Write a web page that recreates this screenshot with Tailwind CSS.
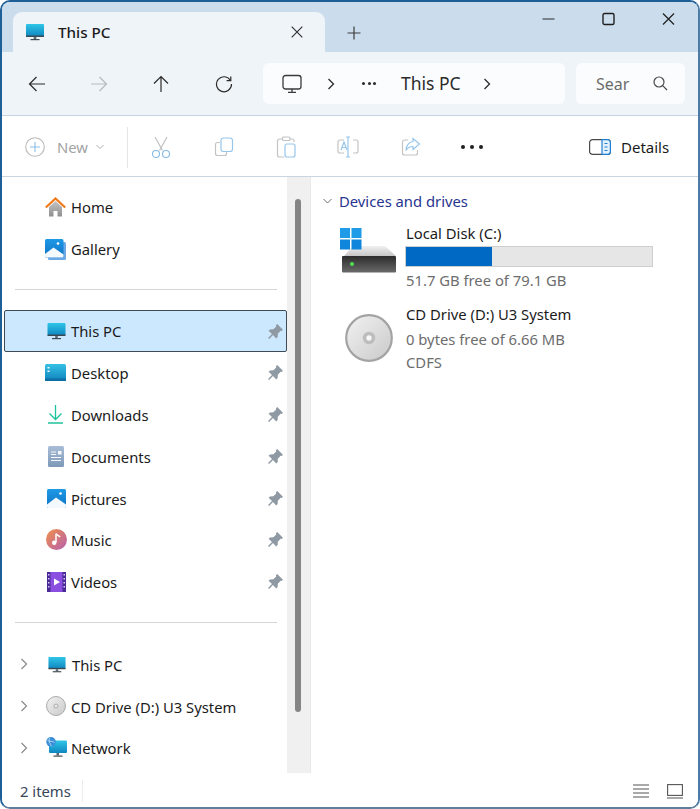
<!DOCTYPE html>
<html>
<head>
    <meta charset="UTF-8">
    <title>This PC - File Explorer</title>
    <script src="https://cdn.jsdelivr.net/npm/@tailwindcss/browser@4"></script>
</head>
<body class="bg-white font-['Noto_Sans',sans-serif] text-[14.800px] text-[#1b1b1b] overflow-hidden">
    <!-- shared icons -->
    <svg width="0" height="0" class="absolute">
        <defs>
            <linearGradient id="screen" x1="0" y1="0" x2="0" y2="1"><stop offset="0" stop-color="#2fc6e8"/><stop offset="1" stop-color="#0f86c0"/></linearGradient>
            <linearGradient id="disc" x1="0" y1="0" x2="1" y2="1"><stop offset="0" stop-color="#f2f2f2"/><stop offset="1" stop-color="#c9c9c9"/></linearGradient>
            <linearGradient id="tile" x1="0" y1="0" x2="0" y2="1"><stop offset="0" stop-color="#1e9ae6"/><stop offset="1" stop-color="#0d72c4"/></linearGradient>
            <linearGradient id="docs" x1="0" y1="0" x2="0" y2="1"><stop offset="0" stop-color="#a9bdd6"/><stop offset="1" stop-color="#7e98b8"/></linearGradient>
            <linearGradient id="music" x1="0" y1="0" x2="1" y2="1"><stop offset="0" stop-color="#f0904a"/><stop offset="1" stop-color="#b65fb0"/></linearGradient>
            <linearGradient id="desk" x1="0" y1="0" x2="0" y2="1"><stop offset="0" stop-color="#35c1e4"/><stop offset="1" stop-color="#0f82bd"/></linearGradient>
            <linearGradient id="driveFace" x1="0" y1="0" x2="0" y2="1"><stop offset="0" stop-color="#2b2b2b"/><stop offset="1" stop-color="#6a6a6a"/></linearGradient>
            <linearGradient id="driveTop" x1="0" y1="0" x2="0" y2="1"><stop offset="0" stop-color="#f0f0f0"/><stop offset="1" stop-color="#c6c6c6"/></linearGradient>
            <linearGradient id="house" x1="0" y1="0" x2="0" y2="1"><stop offset="0" stop-color="#c4c4c4"/><stop offset="1" stop-color="#8f8f8f"/></linearGradient>
            <symbol id="pin" viewBox="0 0 16 16"><path d="M9.600 1 15 6.400 13.800 7.600 12.800 7.300 10.200 10 10 13.200 8.700 14.500 5.600 11.300 2 15 1 14 4.700 10.400 1.500 7.300 2.800 6 6 5.800 8.700 3.200 8.400 2.200Z" fill="#8f99a3"/></symbol>
            <symbol id="monitor" viewBox="0 0 20 20"><rect x="1" y="2" width="18" height="12.500" rx="1" fill="url(#screen)"/><rect x="1" y="13.500" width="18" height="1.500" fill="#3a4a55"/><rect x="8.700" y="15" width="2.600" height="2" fill="#5b6770"/><rect x="5.500" y="17" width="9" height="1.200" fill="#3f4a52"/></symbol>
            <symbol id="cd" viewBox="0 0 20 20"><circle cx="10" cy="10" r="9.500" fill="url(#disc)" stroke="#a3a3a3" stroke-width=".9"/><circle cx="10" cy="10" r="2.600" fill="#bdbdbd"/><circle cx="10" cy="10" r="1.100" fill="#f7f7f7"/></symbol>
        </defs>
    </svg>

    <div class="w-[700px] h-[809px] flex flex-col overflow-hidden rounded-[10px] border-2 border-[#1f5f98] border-r-[#4c7ba6] border-b-[#5d7f9e] bg-white">
        <!-- title strip -->
        <div class="h-[50px] shrink-0 bg-[#cbddec] flex items-start pl-[11px]">
            <div class="w-[312px] h-[40px] mt-[10px] shrink-0 rounded-t-[9px] bg-[#eff4f9] flex items-center pl-[12px] pr-[22px]">
                <svg class="w-[20px] h-[20px] mr-[13px]" viewBox="0 0 20 20"><use href="#monitor"/></svg>
                <span class="flex-1 pt-[1px] text-[15.200px] font-medium text-[#1b1b1b]">This PC</span>
                <svg class="w-[12px] h-[12px]" viewBox="0 0 12 12" fill="none" stroke="#2b2b2b" stroke-width="1.100"><path d="M.7.7l10.600 10.600M11.300.7.7 11.300"/></svg>
            </div>
            <svg class="w-[14px] h-[14px] mt-[24px] ml-[22px]" viewBox="0 0 14 14" fill="none" stroke="#3c3c3c" stroke-width="1.200"><path d="M7 .5v13M.5 7h13"/></svg>
            <div class="flex-1"></div>
            <div class="flex items-center mt-[10px] pr-[23px] gap-[47px]">
                <svg class="w-[13px] h-[14px]" viewBox="0 0 13 14" fill="none" stroke="#2b2b2b" stroke-width="1.200"><path d="M.5 7h12"/></svg>
                <svg class="w-[13px] h-[14px]" viewBox="0 0 13 14" fill="none" stroke="#1f1f1f" stroke-width="1.400"><rect x="1" y="1.500" width="11" height="11" rx="1.500"/></svg>
                <svg class="w-[13px] h-[14px]" viewBox="0 0 13 14" fill="none" stroke="#1f1f1f" stroke-width="1.200"><path d="M1 1.500l11 11M12 1.500 1 12.500"/></svg>
            </div>
        </div>

        <!-- navigation row -->
        <div class="h-[64px] shrink-0 bg-[#eff4f9] border-b border-[#c4d3df] flex items-center pl-[26px]">
            <svg class="w-[18px] h-[18px]" viewBox="0 0 18 18" fill="none" stroke="#2b2b2b" stroke-width="1.200"><path d="M17 9H1.500M8.500 2 1.500 9l7 7"/></svg>
            <svg class="w-[18px] h-[18px] ml-[44px]" viewBox="0 0 18 18" fill="none" stroke="#b4bac0" stroke-width="1.200"><path d="M1 9h15.500M9.500 2l7 7-7 7"/></svg>
            <svg class="w-[18px] h-[18px] ml-[44px]" viewBox="0 0 18 18" fill="none" stroke="#2b2b2b" stroke-width="1.200"><path d="M9 17V1.500M2 8.500l7-7 7 7"/></svg>
            <svg class="w-[18px] h-[18px] ml-[45px]" viewBox="0 0 18 18" fill="none" stroke="#2b2b2b" stroke-width="1.200"><path d="M15.500 5.500A7.500 7.500 0 1 0 16.500 9"/><path d="M15.800 1.500v4.200h-4.200"/></svg>
            <div class="w-[302px] h-[41px] ml-[30px] rounded-[6px] bg-[#fbfcfe] flex items-center">
                <svg class="w-[20px] h-[20px] ml-[19px]" viewBox="0 0 20 20" fill="none" stroke="#3a3a3a" stroke-width="1.300"><rect x="1" y="1.500" width="18" height="13.500" rx="2.500"/><path d="M10 15v3M6 18.300h8"/></svg>
                <svg class="w-[8px] h-[12px] ml-[25px]" viewBox="0 0 8 12" fill="none" stroke="#2b2b2b" stroke-width="1.300"><path d="M1.500 1 6.500 6l-5 5"/></svg>
                <span class="ml-[27px] flex gap-[2.500px]"><i class="w-[3px] h-[3px] rounded-full bg-[#2b2b2b]"></i><i class="w-[3px] h-[3px] rounded-full bg-[#2b2b2b]"></i><i class="w-[3px] h-[3px] rounded-full bg-[#2b2b2b]"></i></span>
                <span class="ml-[25px] w-[59px] whitespace-nowrap text-[17.500px] text-[#2b2b2b]">This PC</span>
                <svg class="w-[8px] h-[12px] ml-[23px]" viewBox="0 0 8 12" fill="none" stroke="#2b2b2b" stroke-width="1.300"><path d="M1.500 1 6.500 6l-5 5"/></svg>
            </div>
            <div class="w-[109px] h-[41px] ml-[11px] rounded-[6px] bg-[#fbfcfe] flex items-center pl-[20px]">
                <span class="w-[31px] whitespace-nowrap text-[16px] text-[#6b6b6b]">Sear</span>
                <svg class="w-[15px] h-[15px] ml-[26px]" viewBox="0 0 15 15" fill="none" stroke="#4a4a4a" stroke-width="1.200"><circle cx="6" cy="6" r="5"/><path d="M9.700 9.700 14 14"/></svg>
            </div>
        </div>

        <!-- command bar -->
        <div class="h-[61px] shrink-0 bg-white border-b border-[#c9d6df] flex items-center pl-[23px] pt-[2px]">
            <svg class="w-[20px] h-[20px]" viewBox="0 0 20 20" fill="none" stroke-width="1.100"><circle cx="10" cy="10" r="9.300" stroke="#b9b9b9"/><path d="M10 5v10M5 10h10" stroke="#8fbfe6"/></svg>
            <span class="ml-[12px] w-[31px] text-[14.800px] text-[#a3a3a3]">New</span>
            <svg class="w-[8px] h-[6px] ml-[8px]" viewBox="0 0 8 6" fill="none" stroke="#adadad"><path d="M.5 1 4 4.500 7.500 1"/></svg>
            <div class="w-px h-[41px] ml-[23px] bg-[#e6e6e6]"></div>
            <svg class="w-[20px] h-[22px] ml-[23px]" viewBox="0 0 20 22" fill="none" stroke-width="1.100"><path d="M4 1l7.500 13.500M16 1 8.500 14.500" stroke="#bdbdbd"/><circle cx="5" cy="18" r="3.500" stroke="#84bbe8"/><circle cx="15" cy="18" r="3.500" stroke="#84bbe8"/></svg>
            <svg class="w-[20px] h-[20px] ml-[43px]" viewBox="0 0 20 20" fill="none" stroke-width="1.200"><path d="M6 5.500H3.500A2 2 0 0 0 1.500 7.500v9a2 2 0 0 0 2 2h7a2 2 0 0 0 2-2V15" stroke="#c4c4c4"/><rect x="7" y="1" width="11.500" height="13.500" rx="2.500" stroke="#97c6ec"/></svg>
            <svg class="w-[20px] h-[22px] ml-[42px]" viewBox="0 0 20 22" fill="none" stroke-width="1.200"><path d="M6.500 3H3.500a2 2 0 0 0-2 2v14a2 2 0 0 0 2 2H8M14 3h2a2 2 0 0 1 2 2v1" stroke="#c4c4c4"/><rect x="6.500" y="1" width="7.500" height="3.500" rx="1" stroke="#c4c4c4"/><rect x="9" y="8" width="10" height="13" rx="2" stroke="#97c6ec"/></svg>
            <svg class="w-[22px] h-[22px] ml-[41px]" viewBox="0 0 22 22" fill="none" stroke-width="1.200"><path d="M7 4H3a2 2 0 0 0-2 2v9a2 2 0 0 0 2 2h4M16 4h3a2 2 0 0 1 2 2v9a2 2 0 0 1-2 2h-3" stroke="#c4c4c4"/><path d="M11 1v20M9 1h4M9 21h4" stroke="#97c6ec"/><path d="M4 14l3-8 3 8M5.200 11.500h3.600" stroke="#97c6ec"/></svg>
            <svg class="w-[20px] h-[20px] ml-[42px]" viewBox="0 0 20 20" fill="none" stroke-width="1.200"><path d="M7 3H3.500a2 2 0 0 0-2 2v11a2 2 0 0 0 2 2h11a2 2 0 0 0 2-2v-3" stroke="#c4c4c4"/><path d="M12 1.500 18.500 7 12 12.500V9.500C9 9.500 6.500 10.500 5 13.500 5 8.500 8 5 12 4.500Z" stroke="#97c6ec"/></svg>
            <span class="ml-[40px] flex gap-[5px]"><i class="w-[4px] h-[4px] rounded-full bg-[#1f1f1f]"></i><i class="w-[4px] h-[4px] rounded-full bg-[#1f1f1f]"></i><i class="w-[4px] h-[4px] rounded-full bg-[#1f1f1f]"></i></span>
            <svg class="w-[22px] h-[16px] ml-[106px]" viewBox="0 0 22 16" fill="none" stroke-width="1.200"><rect x=".6" y=".6" width="20.800" height="14.800" rx="3" stroke="#4a4a4a"/><path d="M13 .6h5.400a3 3 0 0 1 3 3v8.800a3 3 0 0 1-3 3H13Z" fill="#e3f1fc" stroke="#1f7fd1"/><path d="M15.500 4.500h3M15.500 8h3M15.500 11.500h3" stroke="#1f7fd1"/></svg>
            <span class="ml-[10px] text-[15px] text-[#1b1b1b]">Details</span>
        </div>

        <!-- main -->
        <div class="flex-1 min-h-0 flex">
            <div class="w-[285px] shrink-0 pt-[9.500px] [&_span]:pt-px">
                <div class="h-[41.750px] flex items-center pl-[43px]">
                    <svg class="w-[21px] h-[21px]" viewBox="0 0 21 21"><path d="M4 10v9.500h4.500v-5.500h4v5.500H17V10L10.500 4Z" fill="url(#house)"/><path d="M.8 10.500 10.500 1.500l9.700 9" fill="none" stroke="#ef7a1a" stroke-width="2.200"/></svg>
                    <span class="ml-[5px] -mt-[2px]">Home</span>
                </div>
                <div class="h-[41.750px] flex items-center pl-[43px]">
                    <svg class="w-[21px] h-[21px]" viewBox="0 0 21 21"><rect x="3" y="3" width="18" height="18" rx="1.500" fill="#6aa8e6"/><path d="M0 1.500A1.500 1.500 0 0 1 1.500 0H17a1.500 1.500 0 0 1 1.500 1.500V17a1.500 1.500 0 0 1-1.500 1.500H1.500A1.500 1.500 0 0 1 0 17Z" fill="url(#tile)"/><path d="M0 15 8.500 8.500 18.500 15.500V17a1.500 1.500 0 0 1-1.500 1.500H1.500A1.500 1.500 0 0 1 0 17Z" fill="#f4f9fe"/><circle cx="13" cy="4.500" r="1.300" fill="#fff"/></svg>
                    <span class="ml-[5px] -mt-[2px]">Gallery</span>
                </div>
                <div class="ml-[13px] mr-[10px] mt-[19px] mb-[20px] h-px bg-[#d5d5d5]"></div>

                <div class="ml-[2px] h-[42px] flex items-center pl-[41px] pr-[2px] bg-[#cce8ff] border border-[#3f4a54] rounded-[2px]">
                    <svg class="w-[21px] h-[20px]" viewBox="0 0 20 20"><use href="#monitor"/></svg>
                    <span class="flex-1 ml-[4px]">This PC</span>
                    <svg class="w-[17px] h-[17px]"><use href="#pin"/></svg>
                </div>
                <div class="h-[41.750px] flex items-center pl-[43px] pr-[3px]">
                    <svg class="w-[21px] h-[17px]" viewBox="0 0 21 17"><rect width="21" height="17" rx="1.500" fill="url(#desk)"/><rect x="2.500" y="3" width="2" height="1.500" fill="#fff"/><rect x="2.500" y="6.500" width="2" height="1.500" fill="#fff"/><rect x="0" y="14.500" width="21" height="2.500" fill="#0c6fa6"/></svg>
                    <span class="flex-1 ml-[5px]">Desktop</span>
                    <svg class="w-[17px] h-[17px]"><use href="#pin"/></svg>
                </div>
                <div class="h-[41.750px] flex items-center pl-[43px] pr-[3px]">
                    <svg class="w-[21px] h-[19px]" viewBox="0 0 21 19" fill="none" stroke="#1fc29a" stroke-width="1.300"><path d="M10.500 0v14M4.500 8.500l6 6 6-6M3 18h15"/></svg>
                    <span class="flex-1 ml-[5px]">Downloads</span>
                    <svg class="w-[17px] h-[17px]"><use href="#pin"/></svg>
                </div>
                <div class="h-[41.750px] flex items-center pl-[46px] pr-[3px]">
                    <svg class="w-[16px] h-[21px]" viewBox="0 0 16 21"><rect width="16" height="21" rx="1.500" fill="url(#docs)"/><path d="M3 6h5M3 8.500h5M3 11.500h10M3 14.500h10" stroke="#f3f6fa" stroke-width="1"/><rect x="10" y="5" width="3.500" height="3.500" fill="#f3f6fa"/></svg>
                    <span class="flex-1 ml-[7px]">Documents</span>
                    <svg class="w-[17px] h-[17px]"><use href="#pin"/></svg>
                </div>
                <div class="h-[41.750px] flex items-center pl-[45px] pr-[3px]">
                    <svg class="w-[19px] h-[19px]" viewBox="0 0 19 19"><rect width="19" height="19" rx="1.500" fill="url(#tile)"/><path d="M0 15.500 9 8.500 19 15.500V17.500a1.500 1.500 0 0 1-1.500 1.500h-16A1.500 1.500 0 0 1 0 17.500Z" fill="#f4f9fe"/><circle cx="13.500" cy="4.500" r="1.300" fill="#fff"/></svg>
                    <span class="flex-1 ml-[5px]">Pictures</span>
                    <svg class="w-[17px] h-[17px]"><use href="#pin"/></svg>
                </div>
                <div class="h-[41.750px] flex items-center pl-[44px] pr-[3px]">
                    <svg class="w-[21px] h-[21px]" viewBox="0 0 21 21"><circle cx="10.500" cy="10.500" r="10.500" fill="url(#music)"/><path d="M10 5v8.500" stroke="#fff" stroke-width="1.500"/><circle cx="8.200" cy="13.800" r="2.200" fill="#fff"/><path d="M10 4.500c1 2 3 2 4 3.500" stroke="#fff" stroke-width="1.500" fill="none"/></svg>
                    <span class="flex-1 ml-[4px]">Music</span>
                    <svg class="w-[17px] h-[17px]"><use href="#pin"/></svg>
                </div>
                <div class="h-[41.750px] flex items-center pl-[45px] pr-[3px]">
                    <svg class="w-[19px] h-[20px]" viewBox="0 0 19 20"><rect width="19" height="20" rx="1.500" fill="#8a4fe0"/><rect width="3.500" height="20" fill="#4a2a96"/><rect x="15.500" width="3.500" height="20" fill="#4a2a96"/><path d="M1 2h1.500v1.500H1ZM1 6h1.500v1.500H1ZM1 10h1.500v1.500H1ZM1 14h1.500v1.500H1ZM16.500 2H18v1.500h-1.500ZM16.500 6H18v1.500h-1.500ZM16.500 10H18v1.500h-1.500ZM16.500 14H18v1.500h-1.500Z" fill="#d9c8fa"/><path d="M7 6.500v7l6-3.500Z" fill="#fff"/></svg>
                    <span class="flex-1 ml-[5px]">Videos</span>
                    <svg class="w-[17px] h-[17px]"><use href="#pin"/></svg>
                </div>
                <div class="ml-[13px] mr-[10px] mt-[19px] mb-[21px] h-px bg-[#d5d5d5]"></div>

                <div class="h-[41.750px] flex items-center pl-[18px]">
                    <svg class="w-[8px] h-[12px]" viewBox="0 0 8 12" fill="none" stroke="#8a8a8a" stroke-width="1.200"><path d="M1.500 1 6.500 6l-5 5"/></svg>
                    <svg class="w-[20px] h-[19px] ml-[19px]" viewBox="0 0 20 20"><use href="#monitor"/></svg>
                    <span class="ml-[5px]">This PC</span>
                </div>
                <div class="h-[41.750px] flex items-center pl-[18px]">
                    <svg class="w-[8px] h-[12px]" viewBox="0 0 8 12" fill="none" stroke="#8a8a8a" stroke-width="1.200"><path d="M1.500 1 6.500 6l-5 5"/></svg>
                    <svg class="w-[20px] h-[20px] ml-[18px]" viewBox="0 0 20 20"><use href="#cd"/></svg>
                    <span class="ml-[5px]">CD Drive (D:) U3 System</span>
                </div>
                <div class="h-[41.750px] flex items-center pl-[18px]">
                    <svg class="w-[8px] h-[12px]" viewBox="0 0 8 12" fill="none" stroke="#8a8a8a" stroke-width="1.200"><path d="M1.500 1 6.500 6l-5 5"/></svg>
                    <svg class="w-[21px] h-[21px] ml-[18px]" viewBox="0 0 21 21"><rect x="3" y="3.500" width="18" height="12.500" rx="1" fill="url(#screen)"/><rect x="10.500" y="16" width="2.500" height="2.500" fill="#5b6770"/><rect x="7.500" y="18.500" width="9" height="1.200" fill="#3f4a52"/><circle cx="5" cy="4.800" r="4.800" fill="#3d8fd8"/><path d="M1.500 3.500c2 1.500 4.500 0 7 2M3.500 1c-.8 2.500 0 5.500 2 8.300" stroke="#bfe2fb" stroke-width=".8" fill="none"/></svg>
                    <span class="ml-[4px]">Network</span>
                </div>
            </div>

            <!-- sidebar scrollbar -->
            <div class="w-[23px] shrink-0 bg-[#f0f0f0] pt-[22px] pl-[8px]">
                <div class="w-[6px] h-[513px] rounded-full bg-[#858585]"></div>
            </div>

            <!-- content -->
            <div class="flex-1 min-w-0 pl-[12px] border-l border-[#e8e8e8]">
                <div class="flex items-center h-[20px] mt-[14px]">
                    <svg class="w-[9px] h-[6px]" viewBox="0 0 9 6" fill="none" stroke="#6f6f6f"><path d="M.5 1 4.500 5l4-4"/></svg>
                    <span class="ml-[7px] text-[#27358f]">Devices and drives</span>
                </div>
                <div class="flex mt-[16px]">
                    <svg class="w-[57px] h-[46px] ml-[17px] mt-[1px] shrink-0" viewBox="0 0 57 46">
                        <path d="M4 28 13 18h32l11 10Z" fill="url(#driveTop)"/>
                        <rect x="2" y="28" width="54" height="16.500" rx="1" fill="url(#driveFace)"/>
                        <circle cx="12" cy="36" r="2" fill="#4fe04f"/>
                        <rect width="10" height="10" fill="#1f9be8"/><rect x="11.500" width="10" height="10" fill="#1f9be8"/>
                        <rect y="11.500" width="10" height="10" fill="#0f86dc"/><rect x="11.500" y="11.500" width="10" height="10" fill="#0f86dc"/>
                    </svg>
                    <div class="ml-[8px] w-[248px]">
                        <div class="h-[20px] -mt-[4px] ml-[1px] leading-[20px]">Local Disk (C:)</div>
                        <div class="h-[21px] mt-[3px] bg-[#e6e6e6] border border-[#cfcfcf]"><div class="h-full bg-[#0069c4]" style="width:34.800%"></div></div>
                        <div class="mt-[3px] ml-[1px] leading-[20px] text-[#6d6d6d]">51.7 GB free of 79.1 GB</div>
                    </div>
                </div>
                <div class="flex mt-[14px]">
                    <svg class="w-[48px] h-[48px] ml-[22px] mt-[10px] shrink-0" viewBox="0 0 20 20"><use href="#cd"/></svg>
                    <div class="ml-[12px]">
                        <div class="ml-[1px] leading-[20px]">CD Drive (D:) U3 System</div>
                        <div class="ml-[1px] mt-[5px] leading-[20px] text-[#6d6d6d]">0 bytes free of 6.66 MB</div>
                        <div class="ml-[1px] mt-[3px] leading-[20px] text-[#6d6d6d]">CDFS</div>
                    </div>
                </div>
            </div>
        </div>

        <!-- status bar -->
        <div class="h-[34px] shrink-0 bg-white flex items-center pl-[18px] pr-[15px] pt-[2px]">
            <span class="w-[62px] whitespace-nowrap text-[14.800px] text-[#38465a]">2 items</span>
            <div class="w-px h-[22px] bg-[#ececec]"></div>
            <div class="flex-1"></div>
            <svg class="w-[16px] h-[14px]" viewBox="0 0 16 14" fill="none" stroke="#555" stroke-width="1.100"><path d="M0 1h16M0 5h16M0 9h16M0 13h16"/></svg>
            <svg class="w-[16px] h-[15px] ml-[18px]" viewBox="0 0 16 15" fill="none" stroke="#555" stroke-width="1.100"><rect x=".6" y=".6" width="14.800" height="10.800"/><path d="M0 14h16"/></svg>
        </div>
    </div>
</body>
</html>
